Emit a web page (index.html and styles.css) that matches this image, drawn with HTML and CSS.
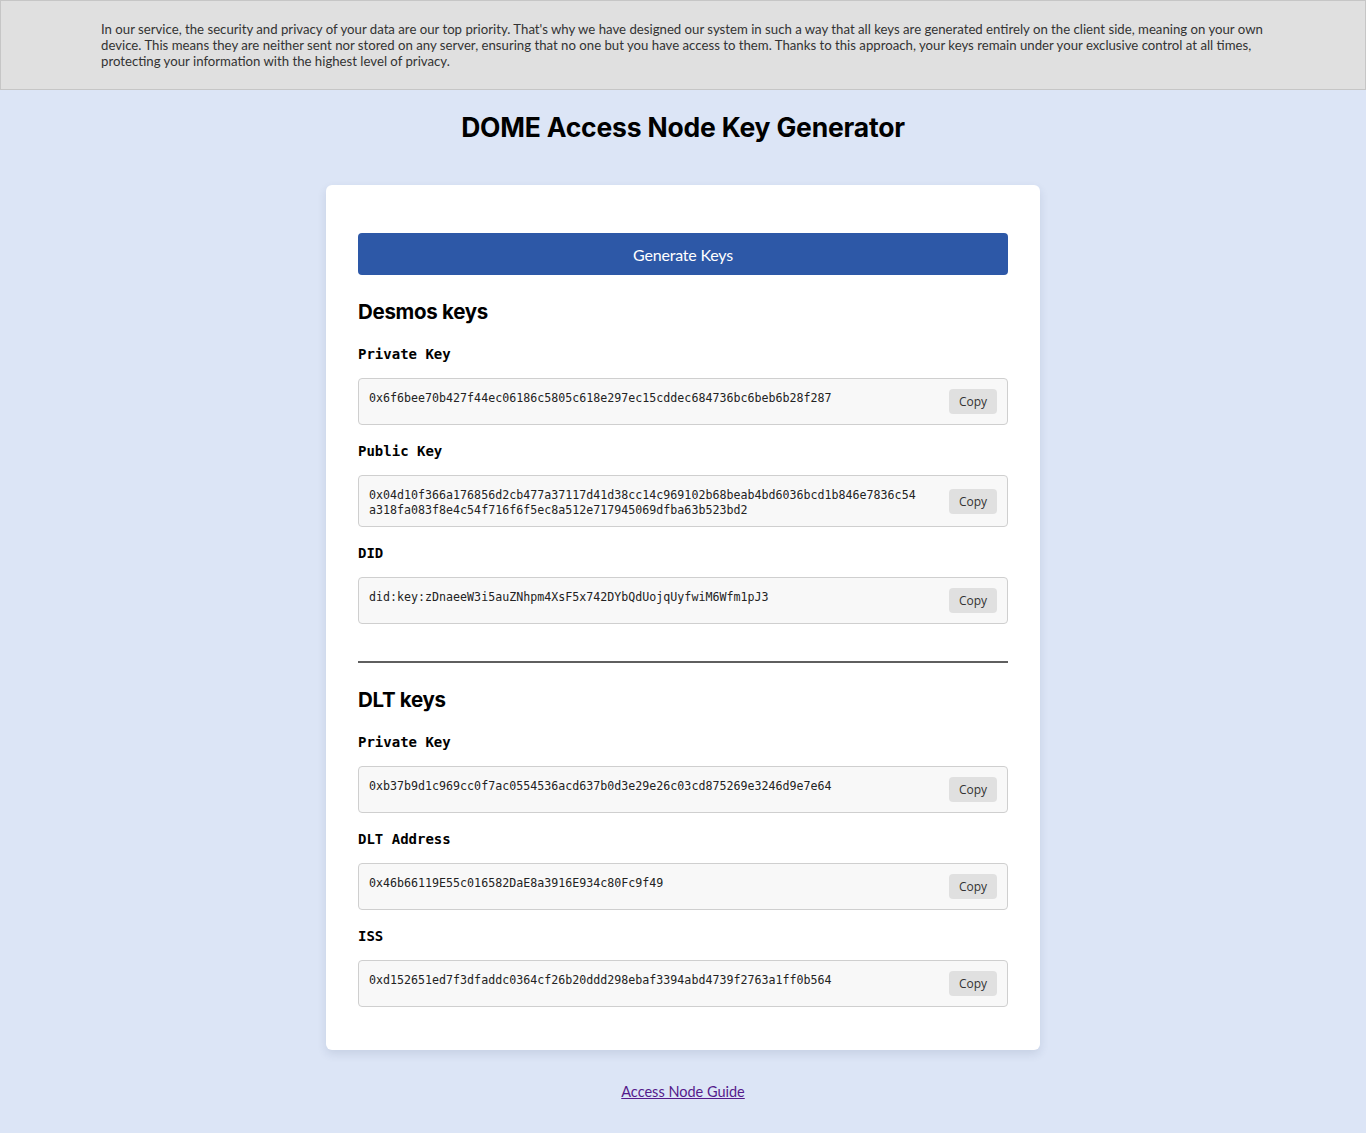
FILE: index.html
```html
<!DOCTYPE html>
<html lang="en">
<head>
<meta charset="utf-8">
<title>DOME Access Node Key Generator</title>
<link rel="stylesheet" href="styles.css">
</head>
<body>
<div class="notice">
  <p>In our service, the security and privacy of your data are our top priority. That's why we have designed our system in such a way that all keys are generated entirely on the client side, meaning on your own device. This means they are neither sent nor stored on any server, ensuring that no one but you have access to them. Thanks to this approach, your keys remain under your exclusive control at all times, protecting your information with the highest level of privacy.</p>
</div>
<main class="page">
  <h1 class="title">DOME Access Node Key Generator</h1>
  <section class="card">
    <button class="generate">Generate Keys</button>

    <h2 class="section-title first">Desmos keys</h2>
    <div class="field">
      <div class="label">Private Key</div>
      <div class="box"><div class="val">0x6f6bee70b427f44ec06186c5805c618e297ec15cddec684736bc6beb6b28f287</div><button class="copy">Copy</button></div>
    </div>
    <div class="field">
      <div class="label">Public Key</div>
      <div class="box"><div class="val">0x04d10f366a176856d2cb477a37117d41d38cc14c969102b68beab4bd6036bcd1b846e7836c54a318fa083f8e4c54f716f6f5ec8a512e717945069dfba63b523bd2</div><button class="copy">Copy</button></div>
    </div>
    <div class="field">
      <div class="label">DID</div>
      <div class="box"><div class="val">did:key:zDnaeeW3i5auZNhpm4XsF5x742DYbQdUojqUyfwiM6Wfm1pJ3</div><button class="copy">Copy</button></div>
    </div>

    <hr class="divider">

    <h2 class="section-title">DLT keys</h2>
    <div class="field">
      <div class="label">Private Key</div>
      <div class="box"><div class="val">0xb37b9d1c969cc0f7ac0554536acd637b0d3e29e26c03cd875269e3246d9e7e64</div><button class="copy">Copy</button></div>
    </div>
    <div class="field">
      <div class="label">DLT Address</div>
      <div class="box"><div class="val">0x46b66119E55c016582DaE8a3916E934c80Fc9f49</div><button class="copy">Copy</button></div>
    </div>
    <div class="field last">
      <div class="label">ISS</div>
      <div class="box"><div class="val">0xd152651ed7f3dfaddc0364cf26b20ddd298ebaf3394abd4739f2763a1ff0b564</div><button class="copy">Copy</button></div>
    </div>
  </section>
  <a class="guide" href="#">Access Node Guide</a>
</main>
</body>
</html>
```
FILE: styles.css
```css
html, body {
  margin: 0;
  padding: 0;
}
body {
  background: #dce5f6;
  font-family: "Lato", "Liberation Sans", sans-serif;
  color: #111;
  min-height: 1133px;
}
.notice {
  background: #e0e0e0;
  border: 1px solid #c6c6c6;
  padding: 20px 100px;
}
.notice p {
  margin: 0;
  font-size: 13.2px;
  line-height: 16px;
  color: #333;
}
.page {
  display: flex;
  flex-direction: column;
  align-items: center;
}
.title {
  font-family: "Inter", "Liberation Sans", sans-serif;
  font-weight: 700;
  font-size: 26.5px;
  line-height: 32px;
  letter-spacing: -0.2px;
  color: #000;
  margin: 21px 0 42px;
}
.card {
  box-sizing: border-box;
  width: 714px;
  background: #fff;
  border-radius: 6px;
  box-shadow: 0 4px 10px rgba(40, 60, 100, 0.12);
  padding: 48px 32px 43px;
}
.generate {
  display: block;
  width: 100%;
  height: 42px;
  border: none;
  border-radius: 4px;
  background: #2d58a7;
  color: #fff;
  font-family: "Lato", sans-serif;
  font-size: 16px;
  letter-spacing: -0.2px;
  cursor: pointer;
}
.section-title {
  font-family: "Inter", "Liberation Sans", sans-serif;
  font-weight: 700;
  font-size: 20.5px;
  line-height: 24px;
  letter-spacing: -0.3px;
  color: #000;
  margin: 21px 0 21px;
}
.section-title.first {
  margin-top: 25px;
}
.field {
  margin-bottom: 17px;
}
.field.last {
  margin-bottom: 0;
}
.label {
  font-family: "DejaVu Sans Mono", monospace;
  font-weight: 700;
  font-size: 14px;
  line-height: 18px;
  color: #000;
  margin-bottom: 15px;
}
.box {
  display: flex;
  align-items: center;
  border: 1px solid #cfcfcf;
  border-radius: 4px;
  background: #f8f8f8;
  padding: 10px;
}
.val {
  flex: 1;
  align-self: flex-start;
  margin: 2px 28px -2px 0;
  font-family: "DejaVu Sans Mono", monospace;
  font-size: 11.65px;
  line-height: 15px;
  color: #222;
  word-break: break-all;
}
.copy {
  flex: none;
  width: 48px;
  height: 25px;
  border: none;
  border-radius: 4px;
  background: #e0e0e0;
  color: #333;
  font-family: "Open Sans", "Noto Sans", sans-serif;
  font-size: 12px;
  padding: 0;
  cursor: pointer;
}
.divider {
  border: 0;
  border-top: 2px solid #5f5f5f;
  height: 0;
  margin: 37px 0 25px;
}
.guide {
  margin-top: 33px;
  font-family: "Lato", sans-serif;
  font-size: 14.5px;
  line-height: 18px;
  color: #551a8b;
}
```
